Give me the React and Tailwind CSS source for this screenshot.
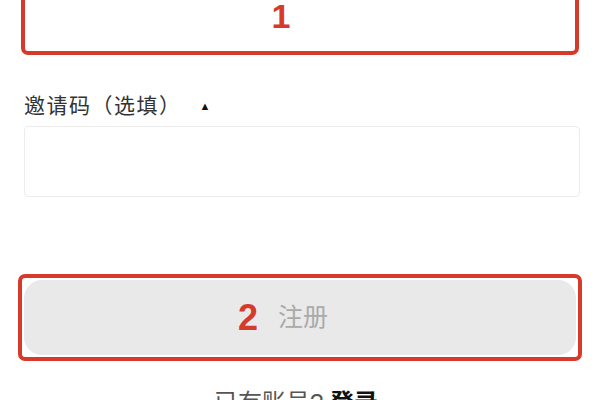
import React from "react";

export default function App() {
  return (
    <div
      className="w-[600px] h-[400px] overflow-hidden bg-white"
      style={{ fontFamily: '"Liberation Sans", "Noto Sans CJK SC", sans-serif' }}
    >
      {/* highlighted box 1 (cut off at top) */}
      <div className="mx-[21px] mt-[-33px] h-[88px] rounded-[7px] border-[4px] border-[#d63a2b] flex items-end justify-center pb-[18px] pr-[38px]">
        <span className="text-[34px] font-bold leading-none text-[#d63a2b]">1</span>
      </div>

      <div className="mt-[38px] pl-[24px] pr-[20px]">
        <div className="flex items-center h-[26px] text-[21px] tracking-[1.5px] text-[#333]">
          <span>邀请码（选填）</span>
          <span className="ml-[18px] text-[11px] text-[#111]">▲</span>
        </div>
        <div className="mt-[7px] h-[71px] rounded-[4px] border border-[#ececec] bg-white"></div>
      </div>

      <div className="mt-[77px] mx-[18px] h-[87px] rounded-[7px] border-[4px] border-[#d63a2b] p-[2px]">
        <div className="h-full rounded-[18px] bg-[#e9e9e9] flex items-center justify-center gap-[20px] pr-[34px]">
          <span className="text-[36px] font-bold leading-none text-[#d63a2b]">2</span>
          <span className="text-[25px] text-[#aaa]">注册</span>
        </div>
      </div>

      <div className="mt-[30px] pr-[8px] text-center text-[24px] leading-none text-[#555]">
        已有账号? <span className="font-bold text-[#111]">登录</span>
      </div>
    </div>
  );
}
